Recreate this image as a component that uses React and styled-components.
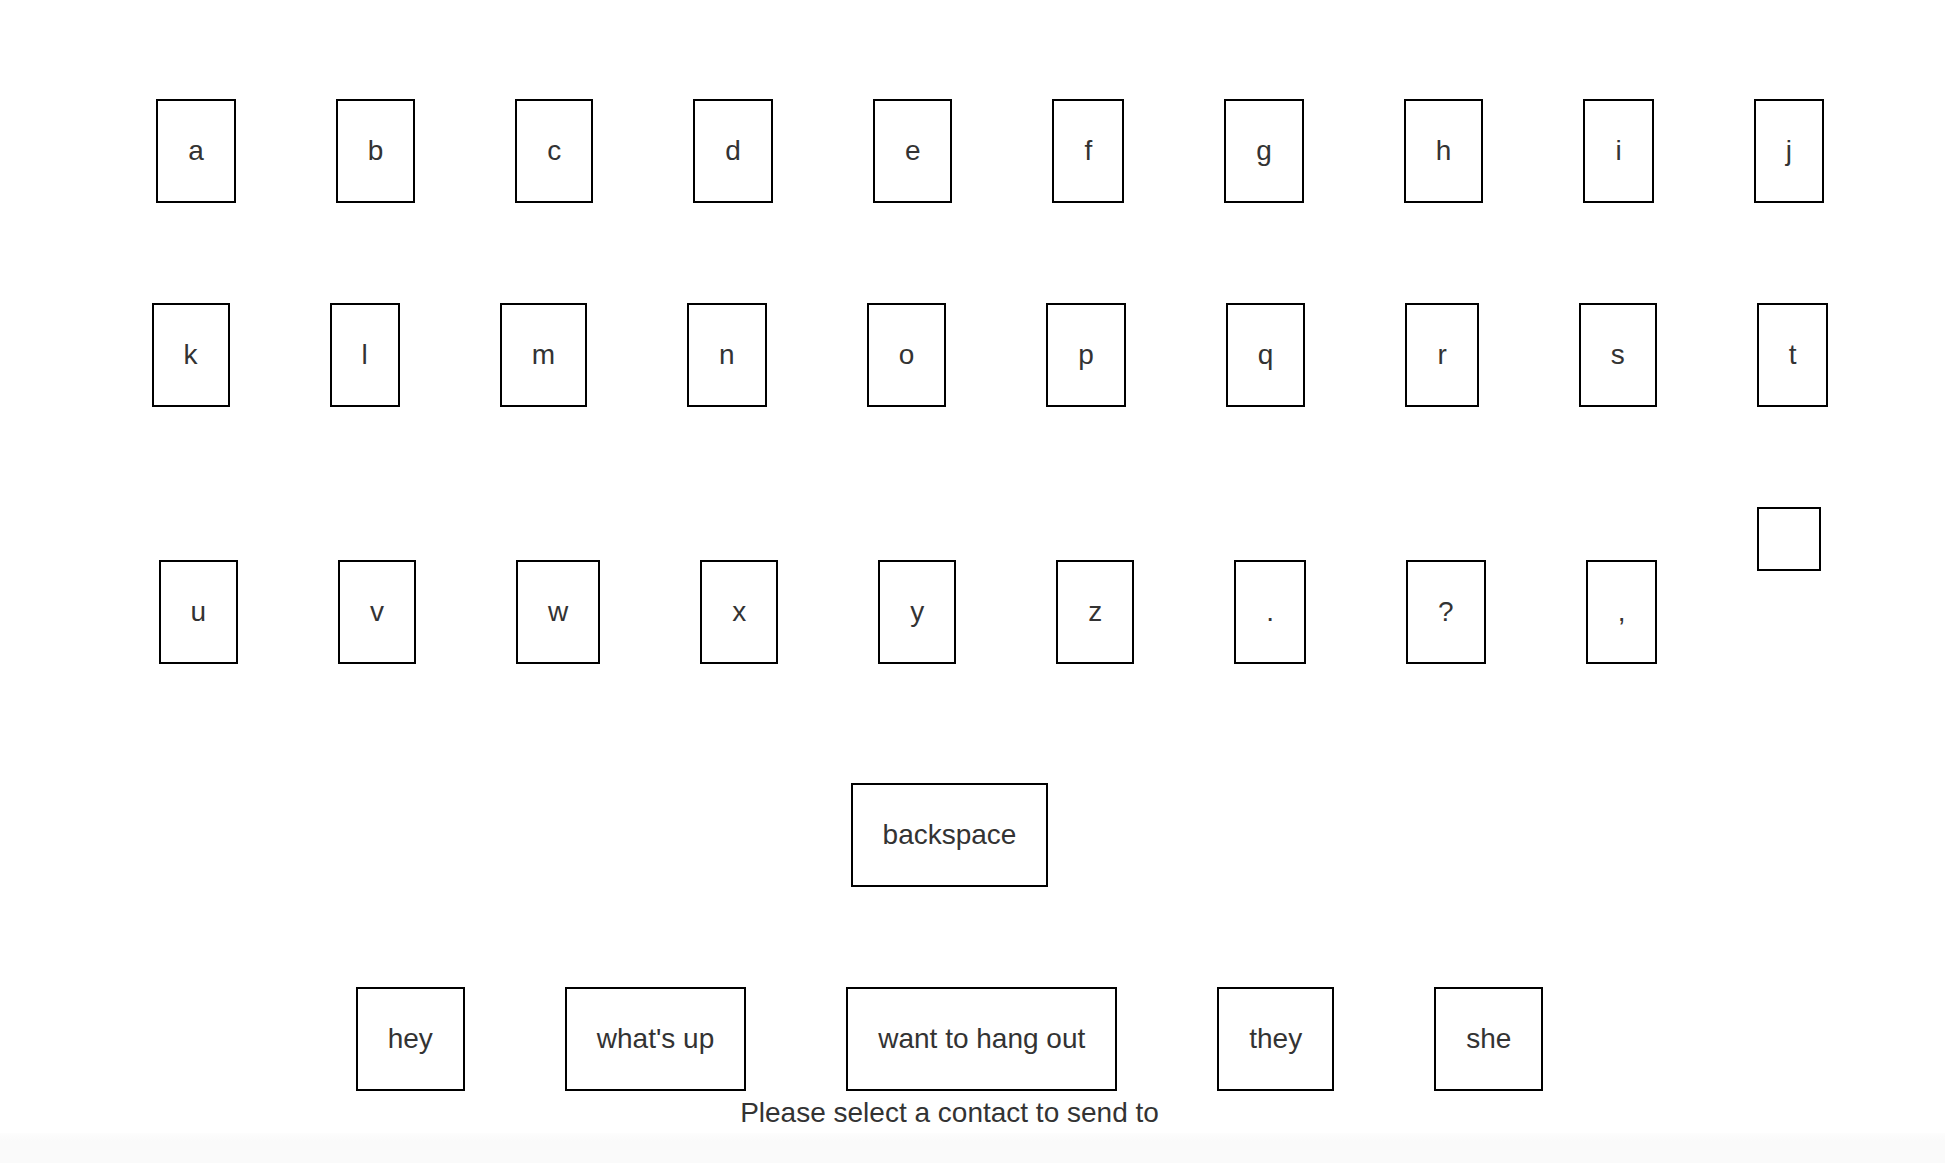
import React from 'react';
import styled, { createGlobalStyle } from 'styled-components';

const GlobalStyle = createGlobalStyle`
  html,
  body {
    margin: 0;
    padding: 0;
    background: #fff;
  }

  body {
    font-family: 'Liberation Sans', Arial, Helvetica, sans-serif;
    font-size: 28px;
    line-height: 40px;
    color: #333;
    overflow: hidden;
  }
`;

const Page = styled.div`
  display: flex;
  flex-direction: column;
  min-height: 100vh;
`;

const Keyboard = styled.div`
  padding: 49px 0 0 35px;
  text-align: center;
`;

const Row = styled.div`
  white-space: nowrap;
`;

const Key = styled.div`
  display: inline-block;
  vertical-align: baseline;
  margin: ${({ $flush }) => ($flush ? '50px 50px 2px' : '50px')};
  padding: 30px;
  border: 2px solid #000;
  line-height: 40px;
  white-space: pre;
  cursor: pointer;
  user-select: none;
`;

const Lower = styled.div`
  margin-top: 19px;
  padding-right: 46px;
  text-align: center;
`;

const Hint = styled.div`
  text-align: center;
  padding-right: 46px;
`;

const Shade = styled.div`
  flex: 1;
  background: linear-gradient(#fdfdfd, #fafafa 8px);
`;

const rows = [
  ['a', 'b', 'c', 'd', 'e', 'f', 'g', 'h', 'i', 'j'],
  ['k', 'l', 'm', 'n', 'o', 'p', 'q', 'r', 's', 't'],
  ['u', 'v', 'w', 'x', 'y', 'z', '.', '?', ',', ''],
];

const phrases = ['hey', "what's up", 'want to hang out', 'they', 'she'];

const App = () => (
  <Page>
    <GlobalStyle />
    <Keyboard>
      {rows.map((row, i) => (
        <Row key={i}>
          {row.map((ch, j) => (
            <Key key={j}>{ch}</Key>
          ))}
        </Row>
      ))}
    </Keyboard>
    <Lower>
      <Row>
        <Key>backspace</Key>
      </Row>
      <Row>
        {phrases.map((p) => (
          <Key key={p} $flush>
            {p}
          </Key>
        ))}
      </Row>
    </Lower>
    <Hint>Please select a contact to send to</Hint>
    <Shade />
  </Page>
);

export default App;
